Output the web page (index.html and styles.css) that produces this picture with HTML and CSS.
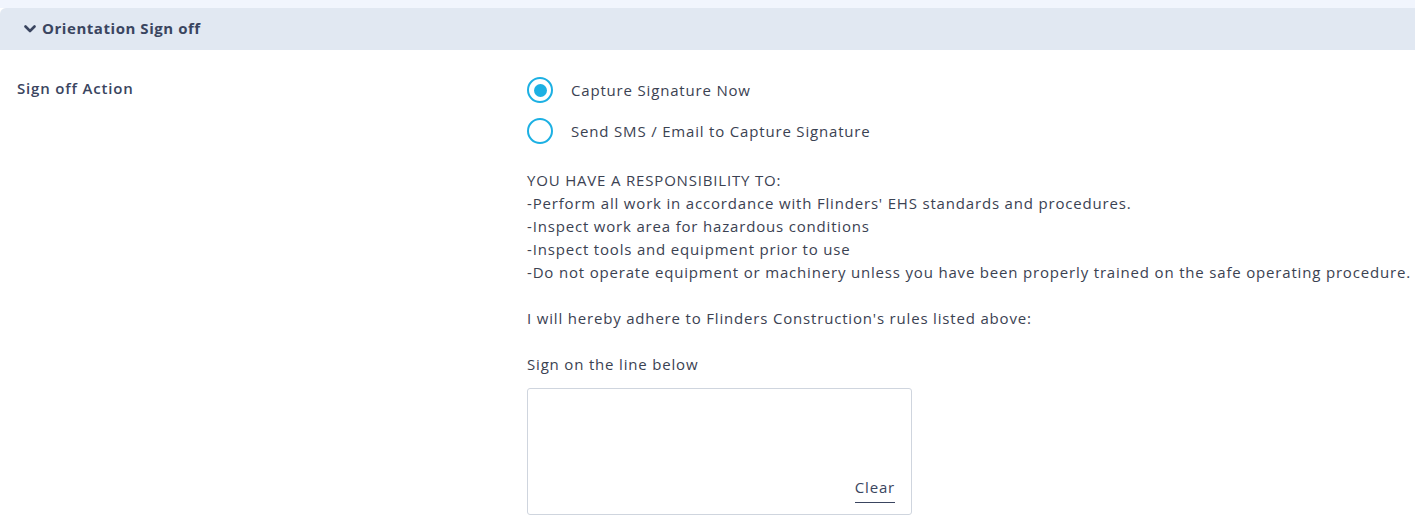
FILE: index.html
```html
<!DOCTYPE html>
<html>
<head>
<meta charset="utf-8">
<link rel="stylesheet" href="styles.css">
</head>
<body>
<div class="page">
  <div class="section-header">
    <svg class="chevron" width="12" height="8" viewBox="0 0 12 8"><path d="M1.5 1.5 L6 6 L10.5 1.5" fill="none" stroke="#3a4560" stroke-width="2.6" stroke-linecap="round" stroke-linejoin="round"/></svg>
    <span class="section-title">Orientation Sign off</span>
  </div>
  <div class="row">
    <div class="label">Sign off Action</div>
    <div class="content">
      <div class="radio-list">
        <label class="radio-item"><span class="radio checked"><span class="dot"></span></span><span class="radio-text">Capture Signature Now</span></label>
        <label class="radio-item"><span class="radio"></span><span class="radio-text">Send SMS / Email to Capture Signature</span></label>
      </div>
      <div class="rules">
        <div>YOU HAVE A RESPONSIBILITY TO:</div>
        <div>-Perform all work in accordance with Flinders' EHS standards and procedures.</div>
        <div>-Inspect work area for hazardous conditions</div>
        <div>-Inspect tools and equipment prior to use</div>
        <div>-Do not operate equipment or machinery unless you have been properly trained on the safe operating procedure.</div>
        <div class="gap">I will hereby adhere to Flinders Construction's rules listed above:</div>
        <div class="gap">Sign on the line below</div>
      </div>
      <div class="sign-box">
        <span class="clear">Clear</span>
      </div>
    </div>
  </div>
</div>
</body>
</html>
```
FILE: styles.css
```css
html, body {
  margin: 0;
  padding: 0;
  background: #ffffff;
}
body {
  font-family: "Open Sans", "Noto Sans", sans-serif;
  color: #3b4252;
  font-size: 15px;
  letter-spacing: 0.82px;
  width: 1415px;
  overflow: hidden;
}
.page {
  padding-top: 8px;
  background: linear-gradient(#f1f5fd 0, #f1f5fd 8px, #ffffff 8px);
}
.section-header {
  height: 42px;
  background: #e1e8f2;
  border-top-left-radius: 6px;
  display: flex;
  align-items: center;
  padding-left: 24px;
  gap: 6px;
}
.chevron {
  display: block;
}
.section-title {
  font-weight: 700;
  font-size: 15px;
  letter-spacing: 0.55px;
  color: #3a4560;
  margin-top: -2px;
}
.row {
  display: flex;
  padding-top: 27px;
}
.label {
  width: 510px;
  padding-left: 17px;
  font-weight: 600;
  color: #3a4560;
  line-height: 22px;
}
.content {
  flex: 1;
}
.radio-list {
  display: flex;
  flex-direction: column;
  gap: 15px;
}
.radio-item {
  display: flex;
  align-items: center;
  gap: 18px;
  height: 26px;
}
.radio {
  width: 22px;
  height: 22px;
  border: 2px solid #1cb0e3;
  border-radius: 50%;
  display: flex;
  align-items: center;
  justify-content: center;
  flex: none;
}
.dot {
  width: 13px;
  height: 13px;
  border-radius: 50%;
  background: #1cb0e3;
}
.radio-text {
  color: #3b4252;
  margin-top: -1px;
}
.rules {
  margin-top: 25px;
  line-height: 23px;
}
.gap {
  margin-top: 23px;
}
.sign-box {
  margin-top: 12px;
  width: 383px;
  height: 125px;
  border: 1px solid #cfd5de;
  border-radius: 3px;
  box-sizing: content-box;
  display: flex;
  align-items: flex-end;
  justify-content: flex-end;
}
.clear {
  margin: 0 16px 11px 0;
  color: #3a4560;
  padding-bottom: 6px;
  border-bottom: 1.5px solid #3a4560;
  line-height: 18px;
}
```
